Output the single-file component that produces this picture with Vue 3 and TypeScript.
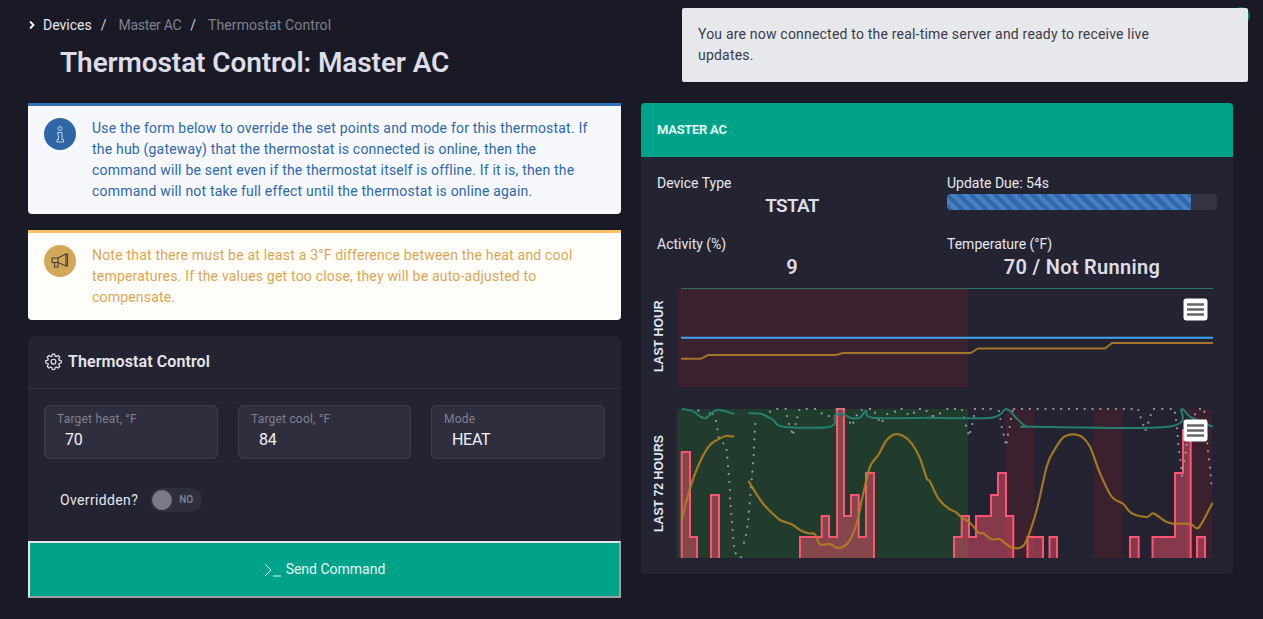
<script setup lang="ts">
type Pt = [number, number];

// points read off the reference at 3x, in two crops
const from = (ox: number, pts: Pt[]): Pt[] => pts.map(([x, y]) => [ox + x / 3, 400 + y / 3]);

function smooth(pts: Pt[]): string {
  let d = `M${pts[0][0].toFixed(1)} ${pts[0][1].toFixed(1)}`;
  for (let i = 0; i < pts.length - 1; i++) {
    const p0 = pts[Math.max(i - 1, 0)];
    const p1 = pts[i];
    const p2 = pts[i + 1];
    const p3 = pts[Math.min(i + 2, pts.length - 1)];
    const c1x = p1[0] + (p2[0] - p0[0]) / 6;
    const c1y = Math.max(p1[1] + (p2[1] - p0[1]) / 6, 409);
    const c2x = p2[0] - (p3[0] - p1[0]) / 6;
    const c2y = Math.max(p2[1] - (p3[1] - p1[1]) / 6, 409);
    d += `C${c1x.toFixed(1)} ${c1y.toFixed(1)} ${c2x.toFixed(1)} ${c2y.toFixed(1)} ${p2[0].toFixed(1)} ${p2[1].toFixed(1)}`;
  }
  return d;
}

const hourTemp = '681,358.8 701,358.8 708,355 836,355 843,353 970.7,353 978,348.5 1105,348.5 1112,343 1213,343';

const dayBands = [
  { x: 677, w: 291, fill: '#213b2d' },
  { x: 1006, w: 28.7, fill: '#3a212d' },
  { x: 1093, w: 30, fill: '#3a212d' },
  { x: 1187, w: 25, fill: '#3a212d' },
];

// [start, end, y] of each run of the activity histogram
const runs: [number, number, number][][] = [
  [[681.7, 690, 452], [690, 697, 537]],
  [[711, 719, 495]],
  [[800, 821.7, 537], [821.7, 829, 516], [829, 837, 537], [837, 844, 409], [844, 851, 516], [851, 858.7, 495], [858.7, 866, 537], [866, 874, 473]],
  [[954, 961.7, 537], [961.7, 969, 516], [969, 976, 537], [976, 991, 516], [991, 998, 495], [998, 1006, 473], [1006, 1013.3, 516]],
  [[1027.5, 1043, 537]],
  [[1049.5, 1057, 537]],
  [[1130, 1138.7, 537]],
  [[1152.5, 1175, 537], [1175, 1183, 473], [1183, 1190.7, 430]],
  [[1197, 1205, 537]],
];
const bars = runs.map((run) => {
  let d = `M${run[0][0]} 558`;
  for (const [a, b, y] of run) d += `L${a} ${y}L${b} ${y}`;
  return d + `L${run[run.length - 1][1]} 558`;
});

const tempA = smooth(from(640, [[125, 362], [140, 300], [160, 235], [185, 175], [210, 135], [235, 118], [258, 108], [283, 110]]));
const tempB = smooth([
  ...from(640, [[325, 242], [345, 275], [370, 312], [395, 338], [420, 360], [455, 373], [480, 390], [505, 400], [525, 403], [540, 433], [570, 432], [590, 443], [610, 440], [630, 420], [650, 370], [670, 280], [690, 200], [715, 165], [740, 120], [765, 103], [790, 108], [815, 130], [840, 175], [860, 235]]),
  ...from(930, [[0, 245], [25, 295], [55, 325], [75, 335], [95, 352], [120, 368], [145, 397], [160, 400], [185, 418], [210, 418], [240, 440], [270, 443], [290, 420], [320, 330], [350, 200], [370, 155], [400, 112], [430, 103], [455, 110], [480, 140], [510, 220], [545, 290], [580, 312], [605, 340], [650, 351], [670, 340], [700, 360], [725, 370], [780, 372], [800, 385], [815, 370], [848, 308]]),
]);

const humA = smooth(from(640, [[125, 27], [155, 32], [185, 52], [200, 52], [225, 32], [240, 30], [283, 42]]));
const humB = smooth([
  ...from(640, [[325, 40], [365, 42], [400, 60], [430, 80], [570, 80], [585, 45], [610, 42], [630, 53], [660, 53], [678, 32], [698, 53], [860, 53]]),
  ...from(930, [[0, 53], [185, 53], [228, 27], [255, 50], [285, 78], [310, 80], [715, 80], [755, 27], [780, 50], [848, 80]]),
]);

const flat: Pt[] = [];
for (let x = 135; x < 620; x += 23.5) {
  if (x < 205 || x > 250) flat.push([x, 27]);
}
const dots: Pt[] = [
  ...from(640, [[175, 32], [185, 52], [198, 54], [210, 40], [218, 42], [228, 63], [232, 88], [236, 112], [250, 130], [260, 150], [262, 173], [264, 198], [266, 222], [268, 246], [270, 270], [270, 295], [272, 318], [274, 342], [276, 366], [278, 390], [280, 414], [282, 438], [287, 460], [303, 472], [312, 428], [318, 405], [322, 380], [325, 358], [327, 335], [329, 310], [331, 285], [333, 262], [335, 238], [337, 215], [339, 190], [341, 165], [342, 143], [343, 118], [344, 95], [346, 72], [365, 42], [390, 35], [412, 27], [437, 27], [441, 48], [447, 72], [455, 95], [460, 98], [467, 72], [472, 52], [478, 30], [500, 27], [525, 27], [545, 40], [567, 48], [590, 27], [612, 27], [630, 68], [640, 68], [650, 46], [665, 30], [690, 27], [705, 38], [716, 60], [728, 63], [742, 42], [765, 35], [785, 27], [803, 42], [822, 38], [840, 27], [860, 33], [880, 48]]),
  ...from(930, [[8, 48], [30, 40], [52, 27], [75, 27], [96, 30], [102, 53], [108, 77], [115, 100], [121, 96], [127, 72], [132, 48], [207, 33], [211, 57], [215, 81], [221, 104], [226, 127], [230, 127], [234, 104], [239, 81], [243, 57], [248, 33], [625, 30], [632, 52], [640, 75], [647, 90], [655, 68], [662, 45], [672, 27], [697, 27], [722, 27], [735, 38], [738, 60], [741, 85], [743, 108], [745, 132], [748, 156], [751, 180], [754, 204], [756, 227], [758, 205], [763, 183], [767, 158], [770, 135], [775, 110], [780, 87], [785, 65], [795, 43], [810, 27], [823, 35], [827, 60], [830, 105], [832, 130], [834, 154], [837, 178], [840, 203], [842, 226], [844, 250]]),
  ...from(930, flat),
];
</script>

<template>
  <div class="page">
    <header class="head">
      <nav class="crumbs">
        <svg class="crumbs__chev" width="8" height="10" viewBox="0 0 8 10"><path d="M2 1.500 5.500 5 2 8.500" /></svg>
        <span class="crumbs__root">Devices</span>
        <span class="crumbs__sep">/</span>
        <span class="crumbs__item crumbs__item--tight">Master AC</span>
        <span class="crumbs__sep">/</span>
        <span class="crumbs__item">Thermostat Control</span>
      </nav>
      <h1 class="title">Thermostat Control: Master AC</h1>
    </header>

    <div class="toast">You are now connected to the real-time server and ready to receive live updates.</div>
    <span class="dot" />

    <main class="cols">
      <section class="left">
        <div class="alert alert--info">
          <span class="alert__icon">
            <svg width="14" height="18" viewBox="0 0 14 18" fill="none" stroke="#bcd4ee" stroke-width="1">
              <circle cx="7" cy="3.500" r="2" />
              <path d="M4.500 7.500h4.500v7h1.500v2.500h-6.500v-2.500h1.500v-4.500h-.5z" />
            </svg>
          </span>
          <p>Use the form below to override the set points and mode for this thermostat. If the hub (gateway) that the thermostat is connected is online, then the command will be sent even if the thermostat itself is offline. If it is, then the command will not take full effect until the thermostat is online again.</p>
        </div>
        <div class="alert alert--warn">
          <span class="alert__icon">
            <svg width="18" height="16" viewBox="0 0 18 16" fill="none" stroke="#44403c" stroke-width="1.100">
              <path d="M1 5h6l8-4v12l-8-3.500H1z" />
              <path d="M7 5v4.500M15 1h1.500v12H15" />
              <path d="M3.500 9.500v4.500h3.500v-4.500" />
            </svg>
          </span>
          <p>Note that there must be at least a 3°F difference between the heat and cool temperatures. If the values get too close, they will be auto-adjusted to compensate.</p>
        </div>

        <div class="panel">
          <div class="panel__head">
            <svg width="17" height="17" viewBox="0 0 24 24" fill="none" stroke="#e6e7ee" stroke-width="1.700" stroke-linejoin="round">
              <path d="M10.300 2.500h3.400l.6 2.900 1.700.7 2.500-1.600 2.400 2.400-1.600 2.500.7 1.700 2.900.6v3.400l-2.900.6-.7 1.700 1.600 2.500-2.400 2.400-2.500-1.600-1.700.7-.6 2.900h-3.400l-.6-2.900-1.700-.7-2.500 1.600-2.400-2.400 1.600-2.500-.7-1.700-2.900-.6v-3.400l2.900-.6.7-1.700-1.600-2.500 2.400-2.400 2.500 1.600 1.700-.7z" transform="translate(0 -1)" />
              <circle cx="12" cy="12.200" r="3.400" />
            </svg>
            <h2>Thermostat Control</h2>
          </div>
          <div class="panel__body">
            <div class="fields">
              <div class="field"><label>Target heat, °F</label><span>70</span></div>
              <div class="field"><label>Target cool, °F</label><span>84</span></div>
              <div class="field"><label>Mode</label><span>HEAT</span></div>
            </div>
            <div class="override">
              <span>Overridden?</span>
              <span class="toggle"><i class="toggle__knob" /><b>NO</b></span>
            </div>
          </div>
          <button class="send">
            <svg width="18" height="14" viewBox="0 0 18 14" fill="none" stroke="#dff5f0" stroke-width="1"><path d="M1 1l6 6-6 6M9 13h8" /></svg>
            Send Command
          </button>
        </div>
      </section>

      <section class="device">
        <div class="device__head">MASTER AC</div>
        <div class="device__body">
          <div class="stats">
            <div class="stat"><span class="stat__label">Device Type</span><strong class="stat__tight">TSTAT</strong></div>
            <div class="stat">
              <span class="stat__label">Update Due: 54s</span>
              <div class="bar"><div class="bar__fill" :style="{ width: '90.400%' }" /></div>
            </div>
            <div class="stat"><span class="stat__label">Activity (%)</span><strong>9</strong></div>
            <div class="stat"><span class="stat__label">Temperature (°F)</span><strong class="stat__wide">70 / Not Running</strong></div>
          </div>

          <div class="chart chart--hour">
            <span class="chart__label">LAST HOUR</span>
            <svg width="540" height="100" viewBox="677 288 540 100">
              <rect x="677" y="288.500" width="291" height="98.500" fill="#3a212d" />
              <path d="M681 288.500H1213" stroke="#2b6f68" fill="none" />
              <path d="M681 337.800H1213" stroke="#3fa3f5" stroke-width="2" fill="none" />
              <polyline :points="hourTemp" stroke="#a3752a" stroke-width="2" fill="none" />
              <g>
                <rect x="1183.500" y="298.500" width="24" height="22" rx="3" fill="#fff" />
                <path d="M1187 304.500h17M1187 309.500h17M1187 314.500h17" stroke="#666" stroke-width="2.600" />
              </g>
            </svg>
          </div>

          <div class="chart chart--day">
            <span class="chart__label">LAST 72 HOURS</span>
            <svg width="540" height="150" viewBox="677 408 540 150">
              <rect v-for="b in dayBands" :key="b.x" :x="b.x" y="409" :width="b.w" height="149" :fill="b.fill" />
              <path v-for="(d, i) in bars" :key="i" :d="d" fill="#ff5572" fill-opacity="0.45" stroke="#ff5572" stroke-width="2" />
              <circle v-for="(p, i) in dots" :key="i" :cx="p[0]" :cy="p[1]" r="1.100" fill="#9a9ca3" />
              <path v-for="d in [humA, humB]" :key="d" :d="d" fill="none" stroke="#23806f" stroke-width="2" />
              <path v-for="d in [tempA, tempB]" :key="d" :d="d" fill="none" stroke="#b07f22" stroke-width="2.200" stroke-opacity="0.9" />
              <g>
                <rect x="1183.500" y="419.500" width="24" height="22" rx="3" fill="#fff" />
                <path d="M1187 425.500h17M1187 430.500h17M1187 435.500h17" stroke="#666" stroke-width="2.600" />
              </g>
            </svg>
          </div>
        </div>
      </section>
    </main>
  </div>
</template>

<style>
html,
body {
  margin: 0;
  background: #1a1a27;
}
</style>

<style scoped>
.page {
  position: relative;
  height: 619px;
  overflow: hidden;
  box-sizing: border-box;
  padding: 15px 30px 0 28px;
  font: 14px/21px Roboto, "Liberation Sans", sans-serif;
  color: #e6e7ee;
}
.crumbs {
  display: flex;
  align-items: center;
  height: 20px;
}
.crumbs__chev {
  margin-right: 7px;
}
.crumbs__chev path {
  fill: none;
  stroke: #fff;
  stroke-width: 1.800;
}
.crumbs__root {
  color: #e6e7ee;
}
.crumbs__item {
  color: #7f808d;
  letter-spacing: 0.1px;
}
.crumbs__item--tight {
  letter-spacing: -0.3px;
}
.crumbs__sep {
  color: #c9cad2;
  margin: 0 12px 0 9px;
}
.title {
  margin: 10px 0 22px 32px;
  font-size: 28px;
  line-height: 36px;
  font-weight: 600;
  letter-spacing: -0.1px;
  color: #dcdde6;
}
.toast {
  position: absolute;
  left: 682px;
  top: 8px;
  z-index: 2;
  width: 566px;
  height: 74px;
  box-sizing: border-box;
  padding: 16px 64px 0 16px;
  background: #e7e8ec;
  border-radius: 2px;
  color: #3b3c48;
  letter-spacing: 0.2px;
}
.dot {
  position: absolute;
  left: 1232px;
  top: 7px;
  width: 18px;
  height: 18px;
  border-radius: 50%;
  background: #0d7a6a;
}
.cols {
  display: grid;
  grid-template-columns: 593px 592px;
  gap: 20px;
  align-items: start;
}
.alert {
  display: flex;
  gap: 16px;
  padding: 12px 16px 12px;
  border-top: 3px solid;
  border-radius: 0 0 4px 4px;
  margin-bottom: 16px;
  letter-spacing: 0.2px;
}
.alert p {
  margin: 0;
  max-width: 500px;
}
.alert__icon {
  flex: none;
  display: flex;
  align-items: center;
  justify-content: center;
  width: 32px;
  height: 32px;
  border-radius: 50%;
}
.alert--info {
  background: #f6f8fd;
  border-color: #3370b5;
  color: #2f67a8;
}
.alert--info .alert__icon {
  background: #2f67a6;
}
.alert--warn {
  background: #fffdf9;
  border-color: #f7c163;
  color: #dba654;
}
.alert--warn .alert__icon {
  background: #d2a758;
}
.panel {
  background: #232331;
  border-radius: 6px 6px 0 0;
}
.panel__head {
  display: flex;
  align-items: center;
  gap: 6px;
  height: 53px;
  box-sizing: border-box;
  padding: 0 0 2px 17px;
  border-bottom: 1px solid #32323f;
}
.panel__head h2 {
  margin: 0;
  font-size: 16px;
  font-weight: 600;
  letter-spacing: 0.1px;
  color: #e6e7ee;
}
.panel__body {
  padding: 16px;
  height: 152px;
  box-sizing: border-box;
}
.fields {
  display: grid;
  grid-template-columns: 174px 173px 174px;
  gap: 20px;
}
.field {
  display: flex;
  flex-direction: column;
  height: 54px;
  box-sizing: border-box;
  padding: 4px 12px;
  background: #2e2e3f;
  border: 1px solid #3d3d50;
  border-radius: 5px;
}
.field label {
  font-size: 12px;
  line-height: 19px;
  letter-spacing: 0.2px;
  color: #7f808d;
}
.field span {
  padding-left: 8px;
  font-size: 16px;
  line-height: 22px;
  letter-spacing: -0.3px;
  color: #f0f1f6;
}
.override {
  display: flex;
  align-items: center;
  gap: 12px;
  margin: 29px 0 0 16px;
  height: 24px;
  letter-spacing: 0.36px;
}
.toggle {
  display: flex;
  align-items: center;
  width: 52px;
  height: 24px;
  box-sizing: border-box;
  padding-left: 2px;
  border-radius: 12px;
  background: #2e2e3f;
}
.toggle__knob {
  width: 20px;
  height: 20px;
  border-radius: 50%;
  background: #7a7a85;
}
.toggle b {
  margin-left: 7px;
  font-size: 10px;
  line-height: 12px;
  font-weight: 600;
  letter-spacing: 0;
  color: #7f808d;
}
.send {
  display: flex;
  align-items: center;
  justify-content: center;
  gap: 4px;
  width: 100%;
  height: 57px;
  box-sizing: border-box;
  background: #00a389;
  border: 2px solid;
  border-color: #e4e4e4 #a0a0a0 #a0a0a0 #e4e4e4;
  color: #e6f6f2;
  font: inherit;
}
.device {
  background: #232331;
  border-radius: 4px;
}
.device__head {
  height: 54px;
  box-sizing: border-box;
  padding: 16px;
  background: #00a389;
  border-radius: 4px 4px 0 0;
  font-size: 13px;
  line-height: 21px;
  font-weight: 700;
  letter-spacing: -0.3px;
  color: #dff5f0;
}
.device__body {
  padding: 16px;
}
.stats {
  display: grid;
  grid-template-columns: 270px 270px;
  column-gap: 20px;
  row-gap: 15.500px;
  margin-bottom: 9.500px;
}
.stat {
  display: flex;
  flex-direction: column;
  min-height: 45px;
}
.stat strong {
  text-align: center;
  font-size: 20px;
  line-height: 24px;
  font-weight: 600;
  color: #dcdde6;
}
.stat strong.stat__tight {
  font-size: 19px;
  letter-spacing: -0.7px;
}
.stat strong.stat__wide {
  letter-spacing: 0.3px;
}
.bar {
  height: 16px;
  background: #333342;
  border-radius: 4px;
  overflow: hidden;
}
.bar__fill {
  height: 100%;
  background: repeating-linear-gradient(45deg, #2f69ad 0 4.300px, #4a7fbf 4.300px 8.600px);
}
.chart {
  display: flex;
}
.chart svg {
  display: block;
  flex: none;
}
.chart--day {
  margin-top: 20px;
}
.chart__label {
  flex: none;
  width: 20px;
  margin-left: -8px;
  margin-right: 8px;
  display: flex;
  align-items: center;
  justify-content: center;
  writing-mode: vertical-rl;
  transform: rotate(180deg);
  font: bold 12.300px/20px "Liberation Sans", sans-serif;
  color: #dfe6f2;
}
.chart--hour .chart__label {
  margin-bottom: 3px;
}
</style>
